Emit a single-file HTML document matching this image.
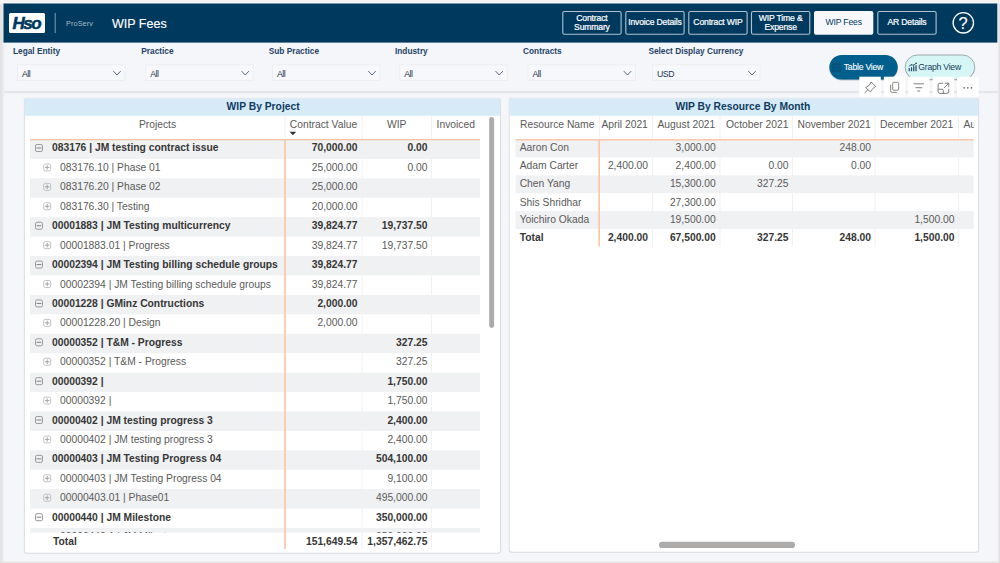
<!DOCTYPE html>
<html>
<head>
<meta charset="utf-8">
<title>WIP Fees</title>
<style>
*{box-sizing:border-box;margin:0;padding:0}
html,body{width:1000px;height:563px;overflow:hidden}
body{background:#e2e2e2;font-family:"Liberation Sans",sans-serif;position:relative;color:#333}
#bg{position:absolute;left:0;top:0;width:1000px;height:563px}
.abs{position:absolute}
#logo{position:absolute;left:9px;top:13px;width:36px;height:20px;color:#00395e;font-weight:bold;font-style:italic;font-size:17px;letter-spacing:-1.5px;line-height:22.5px;text-align:center;padding-right:1.5px;-webkit-text-stroke:.55px #00395e;overflow:hidden}
#pros{position:absolute;left:66px;top:19px;font-size:7.3px;color:#a9bac8;line-height:9px;letter-spacing:.1px}
#ttl{position:absolute;left:112px;top:16.2px;-webkit-text-stroke:.15px #fff;font-size:12.5px;line-height:16px;color:#fff}
.nb{position:absolute;top:11px;height:23.8px;width:59.3px;color:#fff;font-size:8.6px;letter-spacing:-.16px;line-height:9px;text-align:center;display:flex;align-items:center;justify-content:center;-webkit-text-stroke:.22px #fff;white-space:nowrap;padding-bottom:.2px}
.nb.on{color:#00395e;-webkit-text-stroke:0}
#help{position:absolute;left:952.3px;top:11.6px;width:21.8px;height:21.8px;color:#fff;font-size:16.5px;line-height:22.9px;text-align:center;-webkit-text-stroke:.1px #fff}
.fl{position:absolute;top:46.3px;font-size:8.3px;font-weight:bold;color:#1f4266;line-height:10px;white-space:nowrap}
.fb{position:absolute;top:64.2px;height:16.8px;width:108.5px;font-size:8.7px;letter-spacing:-.45px;line-height:20.6px;color:#1f3550;padding-left:5px}
#tv,#gv{position:absolute;top:55px;height:24.5px;font-size:8.7px;letter-spacing:-.26px;line-height:24.5px;white-space:nowrap}
#tv{left:829.4px;width:68.3px;color:#fff}
#gv{left:905.2px;width:69.6px;color:#173a5c}
#tv span{position:absolute;left:14.4px;-webkit-text-stroke:.1px #fff}
#gv span{position:absolute;left:13.1px}
.card{position:absolute;top:98px}
.ct{position:absolute;left:0;top:.4px;right:0;height:17.3px;font-size:10.3px;font-weight:bold;color:#0f3a5f;text-align:center;line-height:17.4px}
.t{position:absolute;font-size:10.3px;line-height:12px;white-space:nowrap;color:#5a5a5a}
.b{font-weight:bold;color:#363636}
.r{text-align:right}
</style>
</head>
<body>
<svg id="bg" width="1000" height="563" viewBox="0 0 1000 563">
<defs><g id="im"><rect x=".5" y=".5" width="7" height="7" rx="1.6" fill="none" stroke="#9a9a9a"/><path d="M1.6 4h4.8" stroke="#808080"/></g><g id="ip"><rect x=".5" y=".5" width="7" height="7" rx="1.6" fill="none" stroke="#c2c2c2"/><path d="M1.7 4h4.6M4 1.7v4.6" stroke="#a0a0a0" stroke-width=".95"/></g></defs>
<rect x="0" y="0" width="1000" height="2.2" fill="#f3f3f3"/>
<rect x="0" y="2.2" width="1000" height="1.4" fill="#fafafa"/>
<rect x="1.4" y="3.5" width="1.2" height="560" fill="#e6e6e6"/>
<rect x="2.6" y="3.5" width="1" height="560" fill="#ececec"/>
<rect x="997.9" y="0" width="1.1" height="563" fill="#e9e9e9"/>
<rect x="3.5" y="3.5" width="994.4" height="558.2" fill="#f5f6fa"/>
<rect x="4.5" y="91.3" width="993.4" height="1.5" fill="#e2e3e7"/><rect x="4.5" y="90.9" width="993.4" height="2.4" fill="#e2e3e7" opacity=".4"/>
<rect x="3.5" y="42.6" width="1" height="49" fill="#ecedf1"/>
<rect x="3.5" y="3.5" width="993.8" height="39.1" fill="#00395e"/>
<rect x="9" y="13" width="36" height="20" rx="1.5" fill="#fff"/>
<rect x="54.7" y="13" width="1" height="20" fill="#7f9bb0"/>
<rect x="562.8" y="11.5" width="58.3" height="22.8" rx="1.6" fill="none" stroke="#b1c2d0" stroke-width="1.1"/>
<rect x="625.8" y="11.5" width="58.3" height="22.8" rx="1.6" fill="none" stroke="#b1c2d0" stroke-width="1.1"/>
<rect x="688.8" y="11.5" width="58.3" height="22.8" rx="1.6" fill="none" stroke="#b1c2d0" stroke-width="1.1"/>
<rect x="751.5" y="11.5" width="58.3" height="22.8" rx="1.6" fill="none" stroke="#b1c2d0" stroke-width="1.1"/>
<rect x="814" y="11" width="59.3" height="23.8" rx="2" fill="#f7f8fb"/>
<rect x="877.8" y="11.5" width="58.3" height="22.8" rx="1.6" fill="none" stroke="#b1c2d0" stroke-width="1.1"/>
<circle cx="963.3" cy="22.8" r="10.2" fill="none" stroke="#fff" stroke-width="1.3"/>
<rect x="17.5" y="64.8" width="107.5" height="15.6" fill="#f7f8fb" stroke="#eceef2"/>
<path d="M113.3 71.1l3.7 3.9 3.7-3.9" fill="none" stroke="#44566b" stroke-width=".9"/>
<rect x="145.75" y="64.8" width="107.5" height="15.6" fill="#f7f8fb" stroke="#eceef2"/>
<path d="M241.55 71.1l3.7 3.9 3.7-3.9" fill="none" stroke="#44566b" stroke-width=".9"/>
<rect x="272.5" y="64.8" width="107.5" height="15.6" fill="#f7f8fb" stroke="#eceef2"/>
<path d="M368.3 71.1l3.7 3.9 3.7-3.9" fill="none" stroke="#44566b" stroke-width=".9"/>
<rect x="399.75" y="64.8" width="107.5" height="15.6" fill="#f7f8fb" stroke="#eceef2"/>
<path d="M495.55 71.1l3.7 3.9 3.7-3.9" fill="none" stroke="#44566b" stroke-width=".9"/>
<rect x="528.0" y="64.8" width="107.5" height="15.6" fill="#f7f8fb" stroke="#eceef2"/>
<path d="M623.8 71.1l3.7 3.9 3.7-3.9" fill="none" stroke="#44566b" stroke-width=".9"/>
<rect x="652.5" y="64.8" width="107.5" height="15.6" fill="#f7f8fb" stroke="#eceef2"/>
<path d="M748.3 71.1l3.7 3.9 3.7-3.9" fill="none" stroke="#44566b" stroke-width=".9"/>
<rect x="829.4" y="55.8" width="68.3" height="24.5" rx="12.25" fill="#000" opacity=".18"/><rect x="829" y="55.4" width="69.1" height="25.3" rx="12.6" fill="#000" opacity=".08"/>
<rect x="829.4" y="55" width="68.3" height="24.5" rx="12.25" fill="#005f8d"/>
<g transform="translate(832 63) scale(.9)"><path d="M0 0h10v10h-10z" fill="#0b4f79"/><path d="M0 3.4h10M0 6.6h10M3.4 0v10M6.6 0v10" stroke="#005f8d" stroke-width=".9"/></g>
<rect x="905.2" y="55.9" width="69.6" height="24.5" rx="12.25" fill="#000" opacity=".16"/>
<rect x="905.2" y="55" width="69.6" height="24.5" rx="12.25" fill="#d5f6f5" stroke="#98a2a5" stroke-width=".9"/>
<g transform="translate(908.1 62.2) scale(.9)"><path d="M.6 10V7.2a.7.7 0 0 1 1.4 0V10zM3.1 10V6.1a.7.7 0 0 1 1.4 0V10zM5.6 10V5a.7.7 0 0 1 1.4 0V10zM8.1 10V3.9a.7.7 0 0 1 1.4 0V10z" fill="#274b6e"/><path d="M.7 4.6L3.6 2.9 6 3.3 9 1.2" fill="none" stroke="#173a5c" stroke-width=".8"/><circle cx="3.6" cy="2.9" r=".7" fill="#173a5c"/><circle cx="6.2" cy="3.2" r=".7" fill="#173a5c"/><circle cx="9" cy="1.2" r=".8" fill="#173a5c"/></g>
<rect x="23.4" y="97.3" width="478.0" height="456.8" rx="3.6" fill="#000" opacity=".025"/>
<rect x="24.0" y="97.9" width="476.8" height="455.6" rx="3.1" fill="#000" opacity=".11"/>
<rect x="24.7" y="98.5" width="475.4" height="454.2" rx="2.5" fill="#fff"/>
<path d="M24.7 115.7V101.0a2.5 2.5 0 0 1 2.5-2.5H497.6a2.5 2.5 0 0 1 2.5 2.5V115.7z" fill="#d6eaf8"/>
<rect x="30" y="139.45" width="450" height="19.43" fill="#f0f1f3"/>
<rect x="30" y="178.31" width="450" height="19.43" fill="#f0f1f3"/>
<rect x="30" y="217.17" width="450" height="19.43" fill="#f0f1f3"/>
<rect x="30" y="256.03" width="450" height="19.43" fill="#f0f1f3"/>
<rect x="30" y="294.89" width="450" height="19.43" fill="#f0f1f3"/>
<rect x="30" y="333.75" width="450" height="19.43" fill="#f0f1f3"/>
<rect x="30" y="372.61" width="450" height="19.43" fill="#f0f1f3"/>
<rect x="30" y="411.47" width="450" height="19.43" fill="#f0f1f3"/>
<rect x="30" y="450.33" width="450" height="19.43" fill="#f0f1f3"/>
<rect x="30" y="489.19" width="450" height="19.43" fill="#f0f1f3"/>
<rect x="30" y="528.05" width="450" height="4.55" fill="#f0f1f3"/>
<use href="#im" x="35" y="144.0"/>
<use href="#ip" x="43.2" y="163.43"/>
<use href="#ip" x="43.2" y="182.86"/>
<use href="#ip" x="43.2" y="202.29"/>
<use href="#im" x="35" y="221.72"/>
<use href="#ip" x="43.2" y="241.15"/>
<use href="#im" x="35" y="260.58"/>
<use href="#ip" x="43.2" y="280.01"/>
<use href="#im" x="35" y="299.44"/>
<use href="#ip" x="43.2" y="318.87"/>
<use href="#im" x="35" y="338.3"/>
<use href="#ip" x="43.2" y="357.73"/>
<use href="#im" x="35" y="377.16"/>
<use href="#ip" x="43.2" y="396.59"/>
<use href="#im" x="35" y="416.02"/>
<use href="#ip" x="43.2" y="435.45"/>
<use href="#im" x="35" y="454.88"/>
<use href="#ip" x="43.2" y="474.31"/>
<use href="#ip" x="43.2" y="493.74"/>
<use href="#im" x="35" y="513.17"/>
<rect x="284.5" y="116" width="1" height="23.5" fill="#f1f1f1"/>
<rect x="361.5" y="116" width="1" height="433" fill="#f1f1f1"/>
<rect x="431" y="116" width="1" height="433" fill="#f1f1f1"/>
<rect x="30" y="139" width="450" height="1.35" fill="#fcc3a4"/>
<rect x="284.2" y="139" width="1.6" height="410" fill="#fcc3a4"/>
<path d="M289.6 131.8h6.6l-3.3 3.4z" fill="#333"/>
<rect x="489.2" y="117" width="4.9" height="211" rx="2.4" fill="#acabaa"/>
<rect x="508.3" y="97.3" width="471.2" height="455.8" rx="3.6" fill="#000" opacity=".025"/>
<rect x="508.90000000000003" y="97.9" width="470.0" height="454.6" rx="3.1" fill="#000" opacity=".11"/>
<rect x="509.6" y="98.5" width="468.6" height="453.2" rx="2.5" fill="#fff"/>
<path d="M509.6 115.7V101.0a2.5 2.5 0 0 1 2.5-2.5H975.7a2.5 2.5 0 0 1 2.5 2.5V115.7z" fill="#d6eaf8"/>
<rect x="515.5" y="139.6" width="458.1" height="17.88" fill="#f0f1f3"/>
<rect x="515.5" y="175.36" width="458.1" height="17.88" fill="#f0f1f3"/>
<rect x="515.5" y="211.12" width="458.1" height="17.88" fill="#f0f1f3"/>
<rect x="652.0" y="116" width="1" height="130.5" fill="#f1f1f1"/>
<rect x="719.5" y="116" width="1" height="130.5" fill="#f1f1f1"/>
<rect x="792.0" y="116" width="1" height="130.5" fill="#f1f1f1"/>
<rect x="874.5" y="116" width="1" height="130.5" fill="#f1f1f1"/>
<rect x="958.0" y="116" width="1" height="130.5" fill="#f1f1f1"/>
<rect x="599" y="116" width="1" height="23.5" fill="#f1f1f1"/>
<rect x="515.5" y="139.1" width="458.1" height="1.35" fill="#fcc3a4"/>
<rect x="598.4" y="139.1" width="1.6" height="107.2" fill="#fcc3a4"/>
<rect x="659" y="541.8" width="136" height="6.2" rx="3.1" fill="#acabaa"/>
<rect x="859.3" y="76.7" width="21.5" height="20" fill="#fff"/>
<g transform="translate(863.9 81.3) scale(1.017)"><path d="M7.3 .9L11.6 5 9 6.9 6.3 10.4 1.7 6.1 5.2 3.9zM4 8.3L1 11.1" fill="none" stroke="#6a6a6a" stroke-width=".85" stroke-linejoin="round" stroke-linecap="round"/></g>
<rect x="883.9" y="76.7" width="21.5" height="20" fill="#fff"/>
<g transform="translate(888.5 81.3) scale(1.017)"><rect x="4.1" y="1" width="5.9" height="7.8" rx="1.1" fill="none" stroke="#6a6a6a" stroke-width=".8"/><path d="M2.1 3.3v6.1a1.5 1.5 0 0 0 1.5 1.5H8.3" fill="none" stroke="#6a6a6a" stroke-width=".8"/></g>
<rect x="908.1" y="76.7" width="21.5" height="20" fill="#fff"/>
<g transform="translate(912.7 81.3) scale(1.017)"><path d="M0.8 2.5h10.4M2.8 6.3h6.6M4.6 9.5h2.8" fill="none" stroke="#6a6a6a" stroke-width=".85"/></g>
<rect x="932.7" y="76.7" width="21.5" height="20" fill="#fff"/>
<g transform="translate(937.6 81.7) scale(1.017)"><path d="M5.5 1.5H2.3A1.8 1.8 0 0 0 .5 3.3V9.7A1.8 1.8 0 0 0 2.3 11.5H9.2A1.8 1.8 0 0 0 11 9.7V7M7 1.5H11V5.5M10.8 1.7L6.2 6.3M.5 7.4H4.4A1.2 1.2 0 0 1 5.6 8.6V11.5" fill="none" stroke="#6a6a6a" stroke-width=".85"/></g>
<rect x="957" y="76.7" width="21.5" height="20" fill="#fff"/>
<g transform="translate(961.6 81.7) scale(1.017)"><circle cx="2.5" cy="6" r=".85" fill="#666"/><circle cx="6.1" cy="6" r=".85" fill="#666"/><circle cx="9.7" cy="6" r=".85" fill="#666"/></g>
</svg>
<div id="logo">Hso</div>
<div id="pros">ProServ</div>
<div id="ttl">WIP Fees</div>
<div class="nb" style="left:562.3px">Contract<br>Summary</div>
<div class="nb" style="left:625.3px">Invoice Details</div>
<div class="nb" style="left:688.3px">Contract WIP</div>
<div class="nb" style="left:751px">WIP Time &amp;<br>Expense</div>
<div class="nb on" style="left:814px">WIP Fees</div>
<div class="nb" style="left:877.3px">AR Details</div>
<div id="help">?</div>
<div class="fl" style="left:13px">Legal Entity</div><div class="fb" style="left:17px">All</div>
<div class="fl" style="left:141.25px">Practice</div><div class="fb" style="left:145.25px">All</div>
<div class="fl" style="left:268.75px">Sub Practice</div><div class="fb" style="left:272px">All</div>
<div class="fl" style="left:395px">Industry</div><div class="fb" style="left:399.25px">All</div>
<div class="fl" style="left:523px">Contracts</div><div class="fb" style="left:527.5px">All</div>
<div class="fl" style="left:648.4px">Select Display Currency</div><div class="fb" style="left:652px">USD</div>
<div id="tv"><span>Table View</span></div>
<div id="gv"><span>Graph View</span></div>
<div class="card" id="c1" style="left:24.7px;width:475.4px;height:454.6px">
<div class="ct" style="padding-left:1.5px">WIP By Project</div>
<div class="abs" style="left:0;top:0;width:475px;height:434.6px;overflow:hidden">
<div class="t b" style="left:27.3px;top:43.6px">083176 | JM testing contract issue</div><div class="t b r" style="left:262.3px;width:70.5px;top:43.6px">70,000.00</div><div class="t b r" style="left:339.3px;width:63.5px;top:43.6px">0.00</div>
<div class="t" style="left:35.3px;top:64.03px">083176.10 | Phase 01</div><div class="t r" style="left:262.3px;width:70.5px;top:64.03px">25,000.00</div><div class="t r" style="left:339.3px;width:63.5px;top:64.03px">0.00</div>
<div class="t" style="left:35.3px;top:83.46px">083176.20 | Phase 02</div><div class="t r" style="left:262.3px;width:70.5px;top:83.46px">25,000.00</div>
<div class="t" style="left:35.3px;top:102.89px">083176.30 | Testing</div><div class="t r" style="left:262.3px;width:70.5px;top:102.89px">20,000.00</div>
<div class="t b" style="left:27.3px;top:122.32px">00001883 | JM Testing multicurrency</div><div class="t b r" style="left:262.3px;width:70.5px;top:122.32px">39,824.77</div><div class="t b r" style="left:339.3px;width:63.5px;top:122.32px">19,737.50</div>
<div class="t" style="left:35.3px;top:141.75px">00001883.01 | Progress</div><div class="t r" style="left:262.3px;width:70.5px;top:141.75px">39,824.77</div><div class="t r" style="left:339.3px;width:63.5px;top:141.75px">19,737.50</div>
<div class="t b" style="left:27.3px;top:161.18px">00002394 | JM Testing billing schedule groups</div><div class="t b r" style="left:262.3px;width:70.5px;top:161.18px">39,824.77</div>
<div class="t" style="left:35.3px;top:180.61px">00002394 | JM Testing billing schedule groups</div><div class="t r" style="left:262.3px;width:70.5px;top:180.61px">39,824.77</div>
<div class="t b" style="left:27.3px;top:200.04px">00001228 | GMinz Contructions</div><div class="t b r" style="left:262.3px;width:70.5px;top:200.04px">2,000.00</div>
<div class="t" style="left:35.3px;top:219.47px">00001228.20 | Design</div><div class="t r" style="left:262.3px;width:70.5px;top:219.47px">2,000.00</div>
<div class="t b" style="left:27.3px;top:238.9px">00000352 | T&amp;M - Progress</div><div class="t b r" style="left:339.3px;width:63.5px;top:238.9px">327.25</div>
<div class="t" style="left:35.3px;top:258.33px">00000352 | T&amp;M - Progress</div><div class="t r" style="left:339.3px;width:63.5px;top:258.33px">327.25</div>
<div class="t b" style="left:27.3px;top:277.76px">00000392 |</div><div class="t b r" style="left:339.3px;width:63.5px;top:277.76px">1,750.00</div>
<div class="t" style="left:35.3px;top:297.19px">00000392 |</div><div class="t r" style="left:339.3px;width:63.5px;top:297.19px">1,750.00</div>
<div class="t b" style="left:27.3px;top:316.62px">00000402 | JM testing progress 3</div><div class="t b r" style="left:339.3px;width:63.5px;top:316.62px">2,400.00</div>
<div class="t" style="left:35.3px;top:336.05px">00000402 | JM testing progress 3</div><div class="t r" style="left:339.3px;width:63.5px;top:336.05px">2,400.00</div>
<div class="t b" style="left:27.3px;top:355.48px">00000403 | JM Testing Progress 04</div><div class="t b r" style="left:339.3px;width:63.5px;top:355.48px">504,100.00</div>
<div class="t" style="left:35.3px;top:374.91px">00000403 | JM Testing Progress 04</div><div class="t r" style="left:339.3px;width:63.5px;top:374.91px">9,100.00</div>
<div class="t" style="left:35.3px;top:394.34px">00000403.01 | Phase01</div><div class="t r" style="left:339.3px;width:63.5px;top:394.34px">495,000.00</div>
<div class="t b" style="left:27.3px;top:413.77px">00000440 | JM Milestone</div><div class="t b r" style="left:339.3px;width:63.5px;top:413.77px">350,000.00</div>
<div class="t" style="left:35.3px;top:433.2px">00000440.1 | JM Milestone</div><div class="t r" style="left:339.3px;width:63.5px;top:433.2px">350,000.00</div>
</div>
<div class="t b" style="left:28.3px;top:438.2px">Total</div><div class="t b r" style="left:262.3px;width:70.5px;top:438.2px">151,649.54</div><div class="t b r" style="left:339.3px;width:63.5px;top:438.2px">1,357,462.75</div>
<div class="t h" style="left:5.3px;width:255px;top:20.5px;text-align:center">Projects</div><div class="t h" style="left:260.3px;width:77px;top:20.5px;text-align:center">Contract Value</div><div class="t h" style="left:337.3px;width:69.5px;top:20.5px;text-align:center">WIP</div><div class="t h" style="left:406.8px;width:48.5px;top:20.5px;text-align:center">Invoiced</div>
</div>
<div class="card" id="c2" style="left:509.6px;width:468.6px;height:453.7px">
<div class="ct" style="padding-right:2px">WIP By Resource By Month</div>
<div class="abs" style="left:0;top:0;width:464px;height:453px;overflow:hidden">
<div class="t" style="left:10.1px;top:43.5px">Aaron Con</div><div class="t r" style="left:136.1px;width:70px;top:43.5px">3,000.00</div><div class="t r" style="left:291.4px;width:70px;top:43.5px">248.00</div>
<div class="t" style="left:10.1px;top:62.38px">Adam Carter</div><div class="t r" style="left:68.4px;width:70px;top:62.38px">2,400.00</div><div class="t r" style="left:136.1px;width:70px;top:62.38px">2,400.00</div><div class="t r" style="left:208.9px;width:70px;top:62.38px">0.00</div><div class="t r" style="left:291.4px;width:70px;top:62.38px">0.00</div>
<div class="t" style="left:10.1px;top:80.26px">Chen Yang</div><div class="t r" style="left:136.1px;width:70px;top:80.26px">15,300.00</div><div class="t r" style="left:208.9px;width:70px;top:80.26px">327.25</div>
<div class="t" style="left:10.1px;top:99.14px">Shis Shridhar</div><div class="t r" style="left:136.1px;width:70px;top:99.14px">27,300.00</div>
<div class="t" style="left:10.1px;top:116.02px">Yoichiro Okada</div><div class="t r" style="left:136.1px;width:70px;top:116.02px">19,500.00</div><div class="t r" style="left:374.9px;width:70px;top:116.02px">1,500.00</div>
<div class="t b" style="left:10.1px;top:133.9px">Total</div><div class="t b r" style="left:68.4px;width:70px;top:133.9px">2,400.00</div><div class="t b r" style="left:136.1px;width:70px;top:133.9px">67,500.00</div><div class="t b r" style="left:208.9px;width:70px;top:133.9px">327.25</div><div class="t b r" style="left:291.4px;width:70px;top:133.9px">248.00</div><div class="t b r" style="left:374.9px;width:70px;top:133.9px">1,500.00</div>
<div class="t h" style="left:10.4px;top:21.3px">Resource Name</div><div class="t h" style="left:91.9px;top:21.3px">April 2021</div><div class="t h" style="left:147.9px;top:21.3px">August 2021</div><div class="t h" style="left:216.4px;top:21.3px">October 2021</div><div class="t h" style="left:287.9px;top:21.3px">November 2021</div><div class="t h" style="left:370.4px;top:21.3px">December 2021</div><div class="t h" style="left:453.9px;top:21.3px">August 2022</div>
</div>
</div>
</body>
</html>
